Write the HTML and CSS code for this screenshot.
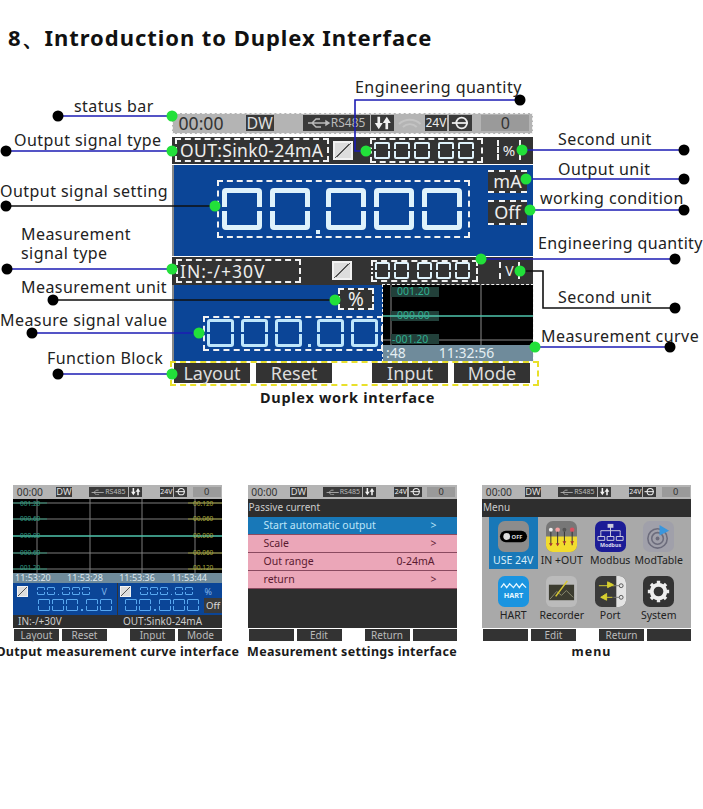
FILE: index.html

```html
<!DOCTYPE html>
<html lang="en">
<head>
    <meta charset="UTF-8">
    <meta name="viewport" content="width=device-width, initial-scale=1.0">
    <title>Introduction to Duplex Interface</title>
    <link rel="stylesheet" href="styles.css">
</head>
<body>
    <h1 class="page-title">8、Introduction to Duplex Interface</h1>

    <!-- annotated main screen -->
    <div class="diagram">
        <div class="screen">
            <div class="status">
                <span class="st-time">00:00</span>
                <span class="st-dw">DW</span>
                <span class="st-usb">
                    <svg viewBox="0 0 24 12" class="usb-icon"><path d="M1 6h21M5 6l4-4h4M5 6l4 4h5M22 6l-3-2v4z" fill="none" stroke="currentColor" stroke-width="1.4"/></svg>
                    <span>RS485</span>
                </span>
                <span class="st-arrows">
                    <svg viewBox="0 0 22 18"><path d="M5 2h3v7h3l-4.500 7L2 9h3zM14 16h3V9h3l-4.500-7L11 9h3z" fill="#f2f2f2"/></svg>
                </span>
                <span class="st-wifi">
                    <svg viewBox="0 0 26 16"><path d="M2 9a16 16 0 0 1 22 0M6 12a10 10 0 0 1 14 0" fill="none" stroke="#c4c4c4" stroke-width="2"/></svg>
                </span>
                <span class="st-24">24V</span>
                <span class="st-plug">
                    <svg viewBox="0 0 22 18"><circle cx="12" cy="9" r="6" fill="none" stroke="#eee" stroke-width="2"/><path d="M1 9h18" stroke="#eee" stroke-width="2"/></svg>
                </span>
                <span class="st-zero">0</span>
            </div>

            <div class="dark-row">
                <span class="sig-box out-box">OUT:Sink0-24mA</span>
                <span class="chk out-chk"></span>
                <span class="dash digits digits-sm top-digits"><i></i><i></i><i></i><b></b><i></i><i></i></span>
                <span class="unit-box pct-box">%</span>
            </div>

            <div class="blue-main">
                <span class="dash digits digits-lg main-digits"><i></i><i></i><b></b><i></i><i></i><i></i></span>
                <div class="side-col">
                    <span class="side-box">mA</span>
                    <span class="side-box">Off</span>
                </div>
            </div>

            <div class="dark-row dark-row2">
                <span class="sig-box in-box">IN:-/+30V</span>
                <span class="chk in-chk"></span>
                <span class="dash digits digits-sm mid-digits"><i></i><i></i><b></b><i></i><i></i><i></i></span>
                <span class="unit-box v-box">V</span>
            </div>

            <div class="lower">
                <div class="lower-left">
                    <span class="meas-unit">%</span>
                    <span class="dash digits digits-md meas-digits"><i></i><i></i><i></i><b></b><i></i><i></i></span>
                </div>
                <div class="curve">
                    <svg class="curve-plot" viewBox="0 0 150 60">
                        <rect width="150" height="60" fill="#000"/>
                        <path d="M8 0v60M98 0v60M0 55h150" stroke="#8a8a8a" stroke-width="1"/>
                        <rect x="8" y="2" width="48" height="10" fill="#22403a"/>
                        <rect x="8" y="26" width="48" height="10" fill="#22403a"/>
                        <rect x="8" y="49" width="48" height="10" fill="#22403a"/>
                        <path d="M0 31h150" stroke="#4fc4ac" stroke-width="1.5"/>
                        <text x="14" y="10" class="curve-val">001.20</text>
                        <text x="14" y="34" class="curve-val">000.00</text>
                        <text x="9" y="58" class="curve-val">-001.20</text>
                    </svg>
                    <div class="curve-time"><span>:48</span><span>11:32:56</span></div>
                </div>
            </div>

            <div class="fn-bar">
                <span>Layout</span><span>Reset</span><span class="fn-gap">Input</span><span>Mode</span>
            </div>
        </div>

        <svg class="leaders" viewBox="0 70 703 340">
            <g fill="none" stroke-width="1.6">
                <path class="ln-blue" d="M58 116H172M6 151H172M6 269H172M32 333H199M58 374H172"/>
                <path class="ln-black" d="M6 206H215M53 300H335M520 271H543V308H675"/>
                <path class="ln-blue" d="M520 100H355V151H366M522 150H684M526 179H684M530 210H684M481 259H675M535 347H670"/>
            </g>
            <g fill="#000">
                <circle cx="58" cy="116" r="5.5"/><circle cx="6" cy="151" r="5.5"/><circle cx="6" cy="206" r="5.5"/>
                <circle cx="7" cy="269" r="5.5"/><circle cx="53" cy="300" r="5.5"/><circle cx="32" cy="333" r="5.5"/>
                <circle cx="58" cy="374" r="5.5"/><circle cx="520" cy="100" r="5.5"/><circle cx="684" cy="150" r="5.5"/>
                <circle cx="684" cy="179" r="5.5"/><circle cx="684" cy="210" r="5.5"/><circle cx="675" cy="259" r="5.5"/>
                <circle cx="675" cy="308" r="5.5"/><circle cx="670" cy="347" r="5.5"/>
            </g>
            <g fill="#22e03a">
                <circle cx="172" cy="116" r="5.5"/><circle cx="172" cy="151" r="5.5"/><circle cx="215" cy="206" r="5.5"/>
                <circle cx="172" cy="269" r="5.5"/><circle cx="335" cy="300" r="5.5"/><circle cx="199" cy="333" r="5.5"/>
                <circle cx="172" cy="374" r="5.5"/><circle cx="366" cy="151" r="5.5"/><circle cx="522" cy="150" r="5.5"/>
                <circle cx="526" cy="179" r="5.5"/><circle cx="530" cy="210" r="5.5"/><circle cx="481" cy="259" r="5.5"/>
                <circle cx="520" cy="271" r="5.5"/><circle cx="535" cy="347" r="5.5"/>
            </g>
        </svg>

        <span class="label lb-status">status bar</span>
        <span class="label lb-outtype">Output signal type</span>
        <span class="label lb-outset">Output signal setting</span>
        <span class="label lb-meastype">Measurement<br>signal type</span>
        <span class="label lb-measunit">Measurement unit</span>
        <span class="label lb-measval">Measure signal value</span>
        <span class="label lb-fn">Function Block</span>
        <span class="label lb-eng1">Engineering quantity</span>
        <span class="label lb-sec1">Second unit</span>
        <span class="label lb-outunit">Output unit</span>
        <span class="label lb-work">working condition</span>
        <span class="label lb-eng2">Engineering quantity</span>
        <span class="label lb-sec2">Second unit</span>
        <span class="label lb-curve">Measurement curve</span>
        <span class="caption lb-duplex">Duplex work interface</span>
    </div>

    <!-- three smaller screens -->
    <div class="thumbs">
        <div class="thumb">
            <div class="mini">
                <div class="status">
                    <span class="st-time">00:00</span><span class="st-dw">DW</span>
                    <span class="st-usb"><svg viewBox="0 0 24 12" class="usb-icon"><path d="M1 6h21M5 6l4-4h4M5 6l4 4h5" fill="none" stroke="currentColor" stroke-width="1.4"/></svg><span>RS485</span></span>
                    <span class="st-arrows"><svg viewBox="0 0 22 18"><path d="M5 2h3v7h3l-4.500 7L2 9h3zM14 16h3V9h3l-4.500-7L11 9h3z" fill="#f2f2f2"/></svg></span>
                    <span class="st-wifi"></span><span class="st-24">24V</span>
                    <span class="st-plug"><svg viewBox="0 0 22 18"><circle cx="12" cy="9" r="6" fill="none" stroke="#eee" stroke-width="2"/><path d="M1 9h18" stroke="#eee" stroke-width="2"/></svg></span>
                    <span class="st-zero">0</span>
                </div>
                <svg class="trend" viewBox="0 0 209 74">
                    <rect width="209" height="74" fill="#000"/>
                    <path d="M24 0v74M77 0v74M129 0v74M182 0v74M0 4h209M0 20h209M0 54h209M0 70h209" stroke="#7c7c7c" stroke-width="1"/>
                    <path d="M0 4h34M0 20h34M0 54h34M0 70h34" stroke="#2f8a70" stroke-width="1"/>
                    <path d="M175 4h34M175 20h34M175 54h34M175 70h34" stroke="#8a8a30" stroke-width="1"/>
                    <path d="M0 37h209" stroke="#4fc4ac" stroke-width="1.500"/>
                    <g class="trend-l">
                        <text x="7" y="7">001.20</text><text x="7" y="22">000.60</text><text x="7" y="39">000.00</text><text x="7" y="56">000.60</text><text x="7" y="71">001.20</text>
                    </g>
                    <g class="trend-r">
                        <text x="180" y="7">00.120</text><text x="180" y="22">00.060</text><text x="180" y="39">00.000</text><text x="180" y="56">00.060</text><text x="180" y="71">00.120</text>
                    </g>
                </svg>
                <div class="trend-time"><span>11:53:20</span><span>11:53:28</span><span>11:53:36</span><span>11:53:44</span></div>
                <div class="read-panel">
                    <div class="read">
                        <div class="read-top"><span class="chk"></span><span class="digits digits-xs"><i></i><i></i><b></b><i></i><i></i><i></i></span><span class="read-unit">V</span></div>
                        <div class="read-big"><span class="digits digits-mini"><i></i><i></i><i></i><b></b><i></i><i></i></span></div>
                    </div>
                    <div class="read read-right">
                        <div class="read-top"><span class="chk"></span><span class="digits digits-xs"><i></i><i></i><i></i><b></b><i></i><i></i></span><span class="read-unit">%</span></div>
                        <div class="read-big"><span class="digits digits-mini"><i></i><i></i><b></b><i></i><i></i><i></i></span><span class="off-tag">Off</span></div>
                    </div>
                </div>
                <div class="sig-row"><span>IN:-/+30V</span><span>OUT:Sink0-24mA</span></div>
                <div class="mini-fn"><span>Layout</span><span>Reset</span><span class="fn-gap">Input</span><span>Mode</span></div>
            </div>
            <p class="caption">Output measurement curve interface</p>
        </div>

        <div class="thumb">
            <div class="mini">
                <div class="status">
                    <span class="st-time">00:00</span><span class="st-dw">DW</span>
                    <span class="st-usb"><svg viewBox="0 0 24 12" class="usb-icon"><path d="M1 6h21M5 6l4-4h4M5 6l4 4h5" fill="none" stroke="currentColor" stroke-width="1.4"/></svg><span>RS485</span></span>
                    <span class="st-arrows"><svg viewBox="0 0 22 18"><path d="M5 2h3v7h3l-4.500 7L2 9h3zM14 16h3V9h3l-4.500-7L11 9h3z" fill="#f2f2f2"/></svg></span>
                    <span class="st-wifi"></span><span class="st-24">24V</span>
                    <span class="st-plug"><svg viewBox="0 0 22 18"><circle cx="12" cy="9" r="6" fill="none" stroke="#eee" stroke-width="2"/><path d="M1 9h18" stroke="#eee" stroke-width="2"/></svg></span>
                    <span class="st-zero">0</span>
                </div>
                <div class="mini-title">Passive current</div>
                <div class="settings">
                    <div class="set-row active"><span>Start automatic output</span><em>&gt;</em></div>
                    <div class="set-row"><span>Scale</span><em>&gt;</em></div>
                    <div class="set-row"><span>Out range</span><em class="range">0-24mA</em></div>
                    <div class="set-row"><span>return</span><em>&gt;</em></div>
                </div>
                <div class="mini-fn"><span></span><span>Edit</span><span class="fn-gap">Return</span><span></span></div>
            </div>
            <p class="caption">Measurement settings interface</p>
        </div>

        <div class="thumb">
            <div class="mini">
                <div class="status">
                    <span class="st-time">00:00</span><span class="st-dw">DW</span>
                    <span class="st-usb"><svg viewBox="0 0 24 12" class="usb-icon"><path d="M1 6h21M5 6l4-4h4M5 6l4 4h5" fill="none" stroke="currentColor" stroke-width="1.4"/></svg><span>RS485</span></span>
                    <span class="st-arrows"><svg viewBox="0 0 22 18"><path d="M5 2h3v7h3l-4.500 7L2 9h3zM14 16h3V9h3l-4.500-7L11 9h3z" fill="#f2f2f2"/></svg></span>
                    <span class="st-wifi"></span><span class="st-24">24V</span>
                    <span class="st-plug"><svg viewBox="0 0 22 18"><circle cx="12" cy="9" r="6" fill="none" stroke="#eee" stroke-width="2"/><path d="M1 9h18" stroke="#eee" stroke-width="2"/></svg></span>
                    <span class="st-zero">0</span>
                </div>
                <div class="mini-title">Menu</div>
                <div class="menu-grid">
                    <div class="menu-item selected">
                        <svg viewBox="0 0 32 32"><rect width="32" height="32" rx="7" fill="#8c8c8c"/><rect x="2" y="10" width="28" height="12" rx="6" fill="#000"/><circle cx="9" cy="16" r="3.5" fill="#ddd"/><text x="14" y="19" class="ic-off">OFF</text></svg>
                        <span>USE 24V</span>
                    </div>
                    <div class="menu-item">
                        <svg viewBox="0 0 32 32"><rect width="32" height="32" rx="7" fill="#777"/><path d="M0 16h32v9a7 7 0 0 1-7 7H7a7 7 0 0 1-7-7z" fill="#f2dc2e"/><circle cx="5" cy="9" r="2" fill="#eee"/><circle cx="12" cy="9" r="2.4" fill="#f2a0a0"/><circle cx="19" cy="9" r="2" fill="#555"/><circle cx="27" cy="9" r="2.4" fill="#d85060"/><path d="M5 11v14M12 11v14M19 11v14M27 11v14" stroke="#333" stroke-width="1"/><path d="M3 23l2 3 2-3zM10 23l2 3 2-3zM17 21l2 3 2-3zM25 21l2 3 2-3z" fill="#a33"/></svg>
                        <span>IN +OUT</span>
                    </div>
                    <div class="menu-item">
                        <svg viewBox="0 0 32 32"><rect width="32" height="32" rx="7" fill="#1c1c96"/><path d="M16 5v5M6 12v-2h20v2M6 12v4M16 10v6M26 12v4" fill="none" stroke="#ccd" stroke-width="1"/><rect x="13" y="3" width="6" height="4" fill="#ccd"/><path d="M3 16h7v4H3zM12.500 16h7v4h-7zM22 16h7v4h-7z" fill="none" stroke="#ccd" stroke-width="1"/><text x="16" y="27" class="ic-modbus">Modbus</text></svg>
                        <span>Modbus</span>
                    </div>
                    <div class="menu-item">
                        <svg viewBox="0 0 32 32"><rect width="32" height="32" rx="7" fill="#a0a0aa"/><circle cx="15" cy="18" r="10" fill="none" stroke="#6c6c7c" stroke-width="1.6"/><circle cx="15" cy="18" r="6" fill="none" stroke="#6c6c7c" stroke-width="1.6"/><circle cx="15" cy="18" r="2" fill="#6c6c7c"/><path d="M17 4l10 6-10 5z" fill="#3a96dc"/></svg>
                        <span>ModTable</span>
                    </div>
                    <div class="menu-item">
                        <svg viewBox="0 0 32 32"><rect width="32" height="32" rx="7" fill="#1a94e0"/><path d="M3 12l3-4 3 4 3-4 4 4 3-4 3 4 3-4 4 4" fill="none" stroke="#e6f6ff" stroke-width="1.3"/><text x="16" y="23" class="ic-hart">HART</text></svg>
                        <span>HART</span>
                    </div>
                    <div class="menu-item">
                        <svg viewBox="0 0 32 32"><rect width="32" height="32" rx="6" fill="#bbb"/><rect x="3" y="9" width="26" height="16" fill="#3c3c30"/><path d="M4 24l7-8 5 4 5-5 7 7" fill="none" stroke="#8a8a70" stroke-width="1"/><path d="M10 21L22 5" stroke="#d8c830" stroke-width="1.6"/></svg>
                        <span>Recorder</span>
                    </div>
                    <div class="menu-item">
                        <svg viewBox="0 0 32 32"><rect width="32" height="32" rx="7" fill="#3a3a3a"/><path d="M22 0h3a7 7 0 0 1 7 7v18a7 7 0 0 1-7 7h-3z" fill="#e4e4e4"/><path d="M4 10h12l4-0M13 6l6 3-6 3zM6 22h12M12 18l-6 4 6 3z" fill="#d8d030" stroke="#d8d030"/><circle cx="27" cy="10" r="2" fill="none" stroke="#555"/><circle cx="27" cy="22" r="2" fill="none" stroke="#555"/><path d="M19 10h6M19 22h6" stroke="#777"/></svg>
                        <span>Port</span>
                    </div>
                    <div class="menu-item">
                        <svg viewBox="0 0 32 32"><rect width="32" height="32" rx="7" fill="#333"/><circle cx="16" cy="16" r="7" fill="none" stroke="#eee" stroke-width="4"/><path d="M16 5v4M16 23v4M5 16h4M23 16h4M8.200 8.200l3 3M20.800 20.800l3 3M23.800 8.200l-3 3M11.200 20.800l-3 3" stroke="#eee" stroke-width="3.500"/></svg>
                        <span>System</span>
                    </div>
                </div>
                <div class="mini-fn"><span></span><span>Edit</span><span class="fn-gap">Return</span><span></span></div>
            </div>
            <p class="caption cap-menu">menu</p>
        </div>
    </div>
</body>
</html>
```

FILE: styles.css

```css
body {
    margin: 0;
    width: 703px;
    height: 809px;
    overflow: hidden;
    background: #fff;
    color: #111;
    font-family: "Noto Sans", "Open Sans", sans-serif;
}

.page-title {
    margin: 0;
    height: 70px;
    padding: 20px 0 0 8px;
    box-sizing: border-box;
    font-size: 22px;
    line-height: 34px;
    font-weight: 700;
    letter-spacing: 0.95px;
    white-space: nowrap;
}

/* free canvas for the annotated screen */
.diagram {
    position: relative;
    height: 340px;
}

.screen {
    position: absolute;
    left: 172px;
    top: 43px;
    width: 361px;
    height: 272px;
    display: flex;
    flex-direction: column;
    font-size: 16px;
}

.leaders {
    position: absolute;
    left: 0;
    top: 0;
    width: 703px;
    height: 340px;
    pointer-events: none;
}

.ln-blue { stroke: #1c1cb4; }
.ln-black { stroke: #111; }

.label {
    position: absolute;
    font-size: 16px;
    line-height: 20px;
    letter-spacing: 0.45px;
    color: #222;
    white-space: nowrap;
}

.lb-status { left: 74px; top: 26px; }
.lb-outtype { left: 14px; top: 60px; }
.lb-outset { left: 0; top: 111px; }
.lb-meastype { left: 21px; top: 155px; line-height: 19px; }
.lb-measunit { left: 21px; top: 207px; }
.lb-measval { left: 0; top: 240px; }
.lb-fn { left: 47px; top: 278px; }
.lb-eng1 { left: 355px; top: 7px; }
.lb-sec1 { left: 558px; top: 59px; }
.lb-outunit { left: 558px; top: 89px; }
.lb-work { left: 540px; top: 118px; }
.lb-eng2 { left: 538px; top: 163px; letter-spacing: 0.35px; }
.lb-sec2 { left: 558px; top: 217px; }
.lb-curve { left: 541px; top: 256px; }

.caption {
    margin: 0;
    font-size: 12.500px;
    line-height: 18px;
    font-weight: 700;
    letter-spacing: 0.3px;
    white-space: nowrap;
    color: #1a1a1a;
}

.lb-duplex {
    position: absolute;
    left: 260px;
    top: 318px;
    font-size: 14.500px;
    letter-spacing: 0.7px;
}

/* status bar, sized in em so the small screens can reuse it */
.status {
    display: flex;
    align-items: center;
    flex: none;
    height: 1.300em;
    box-sizing: border-box;
    background: #b4b4b4;
    color: #222;
    line-height: 1;
    outline: 1px dashed #f2f2f2;
    outline-offset: -1px;
}

.status svg { display: block; height: 100%; }

.status > span {
    display: flex;
    align-items: center;
    justify-content: center;
    height: 1em;
    flex: none;
}

.status > .st-time { width: 2.900em; margin-left: 0.200em; font-size: 1.100em; color: #333; }
.status > .st-dw { width: 1.750em; margin-left: 1.200em; background: #3a3a3a; color: #ddd; }
.status > .st-usb { width: 5.600em; height: 1.333em; margin-left: 2.400em; background: #3a3a3a; color: #bbb; font-size: 0.750em; }
.status .usb-icon { width: 2em; height: 1em; flex: none; }
.status > .st-arrows { width: 1.400em; margin-left: 0.100em; background: #3a3a3a; }
.status > .st-wifi { width: 1.600em; margin-left: 0.200em; }
.status > .st-24 { width: 1.850em; height: 1.333em; margin-left: 0.200em; background: #3a3a3a; color: #eee; font-size: 0.750em; }
.status > .st-plug { width: 1.400em; margin-left: 0.150em; background: #3a3a3a; }
.status > .st-zero { width: 3em; margin-left: 0.600em; background: #9a9a9a; color: #333; }

/* dashed marks drawn over the screen */
.dash { border: 2px dashed #f2f2f2; box-sizing: border-box; }

.dark-row {
    display: flex;
    align-items: center;
    height: 27px;
    margin-top: 3px;
    background: #333;
    color: #eee;
}

.dark-row2 { height: 28px; margin-top: 1px; }

.sig-box {
    display: flex;
    align-items: center;
    height: 24px;
    box-sizing: border-box;
    border: 2px dashed #f2f2f2;
    font-size: 17.500px;
    white-space: nowrap;
}

.out-box { width: 154px; margin-left: 3px; padding-left: 3px; letter-spacing: 0.35px; }
.in-box { width: 125px; margin-left: 4px; padding-left: 2px; letter-spacing: 1px; }

.chk {
    display: block;
    flex: none;
    width: 20px;
    height: 19px;
    box-sizing: border-box;
    background: linear-gradient(to top left, #ddd 0 47%, #555 47% 53%, #ddd 53%);
    border: 2px solid #f2f2f2;
}

.out-chk { margin-left: 4px; }
.in-chk { margin-left: 31px; }

/* segment digits */
.digits {
    display: flex;
    align-items: center;
    flex: none;
    --seg: #dff2fb;
    --back: #333;
}

.digits i {
    position: relative;
    display: block;
    flex: none;
    box-sizing: border-box;
    border: 2px solid var(--seg);
    border-radius: 2px;
}

/* notch in both side bars, so a ring reads as segments */
.digits i::after {
    content: "";
    position: absolute;
    left: -6px;
    right: -6px;
    top: 50%;
    height: 2px;
    margin-top: -1px;
    background: var(--back);
}

.digits b {
    display: block;
    flex: none;
    align-self: flex-end;
    background: var(--seg);
}

.digits-sm { height: 25px; padding: 0 2px; gap: 4px; }
.digits-sm i { width: 16px; height: 17px; }
.digits-sm b { width: 0; }
.top-digits { width: 113px; margin-left: 17px; }
.mid-digits { width: 107px; margin-left: 19px; height: 22px; }
.mid-digits i { width: 15px; }

.unit-box {
    display: flex;
    align-items: center;
    justify-content: center;
    border-left: 2px dashed #f2f2f2;
    border-right: 2px dashed #f2f2f2;
    font-size: 15px;
}

.pct-box { width: 20px; height: 20px; margin-left: 14px; }
.v-box { width: 17px; height: 17px; margin-left: 21px; font-size: 14px; }

.blue-main {
    display: flex;
    height: 91px;
    margin-top: 1px;
    background: #0b4597;
    border-left: 2px solid #888;
    box-sizing: border-box;
}

.digits-lg { gap: 8px; padding: 0 3px; --back: #0b4597; }
.digits-lg i { width: 40px; height: 42px; border-width: 5px; border-radius: 4px; }
.digits-lg i::after { height: 4px; margin-top: -2px; }
.digits-lg b { width: 4px; height: 4px; margin: 0 -2px 2px; }

.main-digits {
    width: 253px;
    height: 58px;
    margin: 15px 0 0 43px;
}

.side-col {
    display: flex;
    flex-direction: column;
    gap: 7px;
    margin: 5px 0 0 18px;
}

.side-box {
    display: flex;
    align-items: center;
    justify-content: center;
    width: 39px;
    height: 23px;
    box-sizing: border-box;
    background: #333;
    color: #eee;
    font-size: 18px;
    border-top: 2px dashed #f2f2f2;
    border-bottom: 2px dashed #f2f2f2;
}

.side-box + .side-box { height: 25px; }

.lower {
    display: flex;
    height: 76px;
    background: #0b4597;
    border-left: 2px solid #888;
    box-sizing: border-box;
}

.lower-left {
    display: flex;
    flex-direction: column;
    align-items: flex-start;
    flex: none;
    width: 209px;
}

.meas-unit {
    display: flex;
    align-items: center;
    justify-content: center;
    width: 36px;
    height: 22px;
    margin: 3px 0 0 164px;
    box-sizing: border-box;
    background: #333;
    color: #eee;
    font-size: 19px;
    border: 2px dashed #f2f2f2;
}

.digits-md { gap: 7px; padding: 0 2px; --seg: #bfe6fb; --back: #0b4597; }
.digits-md i { width: 27px; height: 28px; border-width: 3px; border-radius: 3px; }
.digits-md b { width: 3px; height: 3px; margin: 0 -1px 2px; }

.meas-digits {
    width: 180px;
    height: 35px;
    margin: 6px 0 0 29px;
}

.curve {
    flex: 1;
    display: flex;
    flex-direction: column;
    outline: 1px dashed #f2f2f2;
}

.curve-plot { display: block; width: 150px; height: 60px; flex: none; }

.curve-val {
    font-size: 10.500px;
    fill: #2fae90;
}

.curve-time {
    display: flex;
    gap: 33px;
    height: 16px;
    padding-left: 3px;
    background: #6f8b9b;
    color: #e4eef2;
    font-size: 14px;
    line-height: 16px;
}

.fn-bar {
    display: flex;
    gap: 6px;
    height: 21px;
    margin-top: 2px;
    padding: 0 2px;
    width: 365px;
    box-sizing: border-box;
    outline: 2px dashed #e8e02a;
}

.fn-bar span {
    flex: none;
    width: 76px;
    height: 20px;
    background: #333;
    color: #ddd;
    font-size: 18px;
    line-height: 20px;
    text-align: center;
}

.fn-bar .fn-gap { margin-left: 34px; }

/* small screens */
.thumbs {
    display: flex;
    gap: 25.500px;
    margin-top: 75px;
    padding-left: 13px;
}

.thumb {
    display: flex;
    flex-direction: column;
    align-items: center;
    flex: none;
    width: 209px;
}

.thumb .caption { margin-top: 1px; }
.thumb .cap-menu { padding-left: 10px; letter-spacing: 1px; }

.mini {
    display: flex;
    flex-direction: column;
    width: 209px;
    height: 157px;
    background: #2e2e2e;
    font-size: 9.300px;
    overflow: hidden;
}

.mini .status { height: 14px; outline: none; }

.trend { display: block; width: 209px; height: 74px; flex: none; }
.trend-l text { font-size: 6.500px; fill: #2f9a80; }
.trend-r text { font-size: 6.500px; fill: #a8a83a; }

.trend-time {
    display: flex;
    justify-content: space-between;
    height: 10px;
    padding: 0 15px 0 2px;
    background: #6f8b9b;
    color: #dfe8ee;
    font-size: 9px;
    line-height: 10px;
}

.read-panel {
    display: flex;
    height: 32px;
    background: #0b4597;
}

.read { flex: 1; padding: 2px 0 0 4px; }
.read-right { padding-left: 2px; border-left: 1px solid #333; }

.read-top {
    display: flex;
    align-items: center;
    gap: 9px;
    height: 12px;
}

.read-top .chk { width: 11px; height: 11px; border-width: 1px; }

.digits-xs { gap: 2px; --seg: #58a8f0; --back: #0b4597; }
.digits-xs i { width: 8px; height: 8px; border-width: 1px; border-radius: 1px; }
.digits-xs b { width: 1px; height: 1px; margin: 0 1px; }

.read-unit { margin-left: auto; margin-right: 10px; color: #7fb4ea; font-size: 9px; }

.read-big {
    display: flex;
    align-items: center;
    height: 16px;
    padding-left: 21px;
}

.read-right .read-big { padding-left: 5px; }

.digits-mini { gap: 2px; --seg: #58a8f0; --back: #0b4597; }
.digits-mini i { width: 12px; height: 12px; border-width: 1.500px; border-radius: 1px; }
.digits-mini b { width: 2px; height: 2px; margin: 0 1px; }

.off-tag {
    width: 18px;
    margin-left: 5px;
    background: #3a3a3a;
    color: #ddd;
    font-size: 9.500px;
    line-height: 15px;
    text-align: center;
}

.sig-row {
    display: flex;
    height: 13px;
    padding-left: 5px;
    color: #ccc;
    font-size: 10px;
    line-height: 13px;
}

.sig-row span:first-child { width: 105px; }

.mini-fn {
    display: flex;
    gap: 3px;
    height: 14px;
    margin-top: auto;
    padding: 1px 0 1px 1px;
    box-sizing: border-box;
    background: #fff;
}

.mini-fn span {
    flex: none;
    width: 45px;
    height: 12px;
    background: #333;
    color: #bbb;
    font-size: 10px;
    line-height: 12px;
    text-align: center;
}

.mini-fn .fn-gap { margin-left: 20px; }

.mini-title {
    flex: none;
    height: 18px;
    padding-left: 1px;
    background: #2e2e2e;
    color: #ccc;
    font-size: 10px;
    line-height: 17px;
}

.settings {
    display: flex;
    flex-direction: column;
    gap: 1px;
    padding-bottom: 1px;
    background: #8a4a60;
}

.set-row {
    display: flex;
    justify-content: space-between;
    height: 17px;
    padding: 0 20px 0 16px;
    background: #eba6b8;
    color: #5a1a30;
    font-size: 10.500px;
    line-height: 17px;
}

.set-row em { font-style: normal; }
.set-row .range { margin-right: 2px; }
.set-row.active { background: #1878b8; color: #bfe6f8; }

.menu-grid {
    display: grid;
    grid-template-columns: repeat(4, 48.500px);
    grid-auto-rows: 55px;
    flex: 1;
    padding-left: 7px;
    background: #a9a9a9;
}

.menu-item {
    display: flex;
    flex-direction: column;
    align-items: center;
    padding-top: 4px;
    box-sizing: border-box;
    color: #222;
    font-size: 10.500px;
    line-height: 14px;
    white-space: nowrap;
}

.menu-item svg { display: block; width: 31px; height: 31px; margin-bottom: 1px; flex: none; }
.menu-item.selected { height: 52px; background: #1878b8; color: #d8eef8; }

.ic-off { font-size: 6px; font-weight: 700; fill: #ddd; }
.ic-modbus { font-size: 5.500px; font-weight: 700; fill: #dde; text-anchor: middle; }
.ic-hart { font-size: 7.500px; font-weight: 700; fill: #e6f6ff; text-anchor: middle; }
```
